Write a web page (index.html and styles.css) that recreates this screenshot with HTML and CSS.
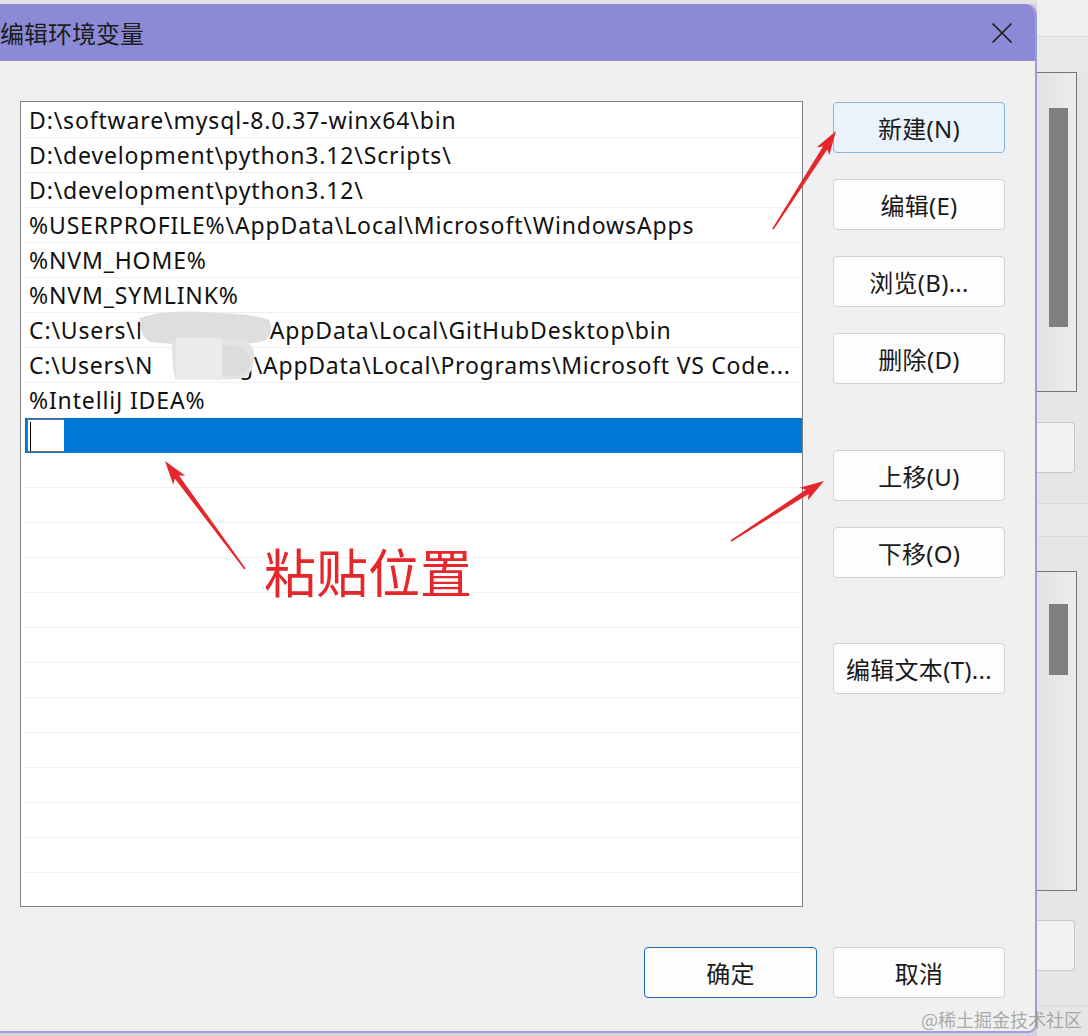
FILE: index.html
```html
<!DOCTYPE html>
<html lang="zh-CN">
<head>
<meta charset="utf-8">
<title>编辑环境变量</title>
<link rel="stylesheet" href="styles.css">
</head>
<body>
<div class="screen">
  <div class="dialog">
    <div class="titlebar">
      <span class="title">编辑环境变量</span>
      <svg class="close" width="22" height="22" viewBox="0 0 22 22"><path d="M1.5 1.5 L20.5 20.5 M20.5 1.5 L1.5 20.5"/></svg>
    </div>
    <div class="content">
      <div class="main">
        <div class="listbox">
          <div class="row">D:\software\mysql-8.0.37-winx64\bin</div>
          <div class="row">D:\development\python3.12\Scripts\</div>
          <div class="row">D:\development\python3.12\</div>
          <div class="row">%USERPROFILE%\AppData\Local\Microsoft\WindowsApps</div>
          <div class="row">%NVM_HOME%</div>
          <div class="row">%NVM_SYMLINK%</div>
          <div class="row">C:\Users\<span class="redact r1">N</span>AppData\Local\GitHubDesktop\bin</div>
          <div class="row tight">C:\Users\<span class="redact r2">N</span>g\AppData\Local\Programs\Microsoft VS Code...</div>
          <div class="row">%IntelliJ IDEA%</div>
          <div class="row selected"><span class="editbox"><span class="caret"></span></span></div>
          <div class="row"></div><div class="row"></div><div class="row"></div><div class="row"></div>
          <div class="row"></div><div class="row"></div><div class="row"></div><div class="row"></div>
          <div class="row"></div><div class="row"></div><div class="row"></div><div class="row"></div>
          <div class="row"></div>
          <svg class="smudge" width="152" height="76" viewBox="0 0 152 76">
            <path d="M2 8 C18 1 50 0 80 3 C100 4 120 5 131 10 C135 17 134 26 126 31 C110 35 90 33 70 34 C50 35 30 34 12 32 C4 28 1 16 2 8 Z" fill="#dedede"/>
            <path d="M34 30 L104 30 C114 32 117 40 116 52 C114 62 110 68 100 69 L38 70 C34 62 34 45 34 30 Z" fill="#e3e3e3"/>
            <rect x="38" y="28" width="46" height="42" fill="#ebebeb"/>
            <path d="M84 36 C96 34 110 38 113 50 C111 62 104 66 94 66 L84 66 Z" fill="#dcdcdc"/>
          </svg>
        </div>
        <div class="side">
          <button class="btn focus">新建(N)</button>
          <button class="btn">编辑(E)</button>
          <button class="btn">浏览(B)...</button>
          <button class="btn">删除(D)</button>
          <button class="btn sep1">上移(U)</button>
          <button class="btn">下移(O)</button>
          <button class="btn sep2">编辑文本(T)...</button>
        </div>
      </div>
      <div class="footer">
        <button class="btn ok">确定</button>
        <button class="btn">取消</button>
      </div>
    </div>
  </div>
  <div class="behind">
    <div class="b-top"></div>
    <div class="b-band"></div>
    <div class="b-scroll s1"><div class="b-thumb t1"></div></div>
    <div class="b-gap g1"></div>
    <div class="b-btn"></div>
    <div class="b-gap g2"></div>
    <div class="b-line"></div>
    <div class="b-gap g3"></div>
    <div class="b-scroll s2"><div class="b-thumb t2"></div></div>
    <div class="b-gap g4"></div>
    <div class="b-btn"></div>
    <div class="b-gap g5"></div>
  </div>
</div>

<svg class="annot" width="1088" height="1036" viewBox="0 0 1088 1036">
  <g fill="#e5262b">
    <polygon transform="translate(773 229) rotate(-57.26)" points="0,-0.8 96.5,-2.6 92.5,-7.5 116.5,0 92.5,7.5 96.5,2.6 0,0.8"/>
    <polygon transform="translate(245 569) rotate(-126.53)" points="0,-0.8 114.4,-2.6 110.4,-7.5 134.4,0 110.4,7.5 114.4,2.6 0,0.8"/>
    <polygon transform="translate(731 541) rotate(-32.83)" points="0,-0.8 90.7,-2.6 86.7,-7.5 110.7,0 86.7,7.5 90.7,2.6 0,0.8"/>
  </g>
</svg>
<div class="label">粘贴位置</div>
<div class="watermark">@稀土掘金技术社区</div>
</body>
</html>
```

FILE: styles.css
```css
* { box-sizing: border-box; }
html, body { margin: 0; padding: 0; }
body {
  width: 1088px;
  height: 1036px;
  overflow: hidden;
  position: relative;
  background: #d4d4da;
  font-family: "Noto Sans", "Noto Sans CJK SC", sans-serif;
  color: #1a1a1a;
}
.screen {
  display: flex;
  align-items: flex-start;
  height: 1036px;
  background: linear-gradient(#e3e3e3 0 4px, #d3d2dc 4px);
}
.dialog {
  flex: none;
  width: 1037px;
  margin-top: 4px;
  background: #f0f0f0;
  border-right: 2px solid #9f9cdc;
  border-bottom: 2px solid #9f9cdc;
  border-radius: 0 11px 9px 0;
  overflow: hidden;
}
.titlebar {
  height: 57px;
  background: #8c8ad7;
  display: flex;
  align-items: center;
  justify-content: space-between;
  padding-right: 22px;
}
.title {
  font-family: "Noto Sans CJK SC", sans-serif;
  font-size: 24px;
  color: #1c1c1c;
}
.close path { stroke: #1c1c1c; stroke-width: 1.7; fill: none; }
.content { padding: 40px 30px 33px 20px; }
.main { display: flex; gap: 30px; }
.listbox {
  position: relative;
  width: 783px;
  height: 806px;
  border: 1px solid #828282;
  background: #ffffff;
  padding: 1px 1px 0 3px;
  overflow: hidden;
  flex: none;
}
.row {
  height: 35px;
  line-height: 34px;
  border-bottom: 1px solid #efefef;
  padding-left: 5px;
  font-size: 23px;
  letter-spacing: 0.85px;
  white-space: nowrap;
  overflow: hidden;
  color: #111;
}
.row.tight { letter-spacing: 0.75px; }
.redact { display: inline-block; width: 134px; overflow: hidden; vertical-align: top; }
.redact.r2 { width: 104px; }
.row.selected {
  background: #0078d7;
  border-bottom-color: #0078d7;
  padding-left: 2px;
  padding-top: 1px;
  margin-left: 1px;
  margin-right: -1px;
}
.editbox {
  display: block;
  width: 37px;
  height: 33px;
  background: #fff;
  border: 1px solid #6e6e6e;
  border-right: none;
  padding: 2px 0 0 2px;
}
.caret { display: block; width: 1px; height: 29px; background: #000; }
.smudge { position: absolute; left: 117px; top: 208px; }
.side {
  display: flex;
  flex-direction: column;
  gap: 26px;
  padding-top: 1px;
  width: 172px;
  flex: none;
}
.btn {
  font-family: "Noto Sans", "Noto Sans CJK SC", sans-serif;
  font-size: 24px;
  letter-spacing: 0.3px;
  color: #1a1a1a;
  width: 172px;
  height: 51px;
  padding: 0;
  background: #fdfdfd;
  border: 1px solid #d0d0d0;
  border-radius: 4px;
  display: flex;
  align-items: center;
  justify-content: center;
}
.btn.focus { background: #eaf3fc; border-color: #86b3dc; }
.btn.sep1 { margin-top: 40px; }
.btn.sep2 { margin-top: 39px; }
.footer {
  display: flex;
  justify-content: flex-end;
  gap: 16px;
  margin-top: 40px;
}
.btn.ok { width: 173px; border-color: #1a6ab5; }

.behind {
  flex: none;
  width: 51px;
  height: 1036px;
  display: flex;
  flex-direction: column;
  background: #e6e6e6;
}
.b-top { height: 37px; background: #efefef; border-bottom: 1px solid #d8d8d8; flex: none; }
.b-band { height: 35px; flex: none; background: #e8e8e8; }
.b-scroll {
  flex: none;
  width: 40px;
  border: 1px solid #767676;
  border-left: none;
  background: linear-gradient(90deg, #e2e2e2, #ececec);
  padding-left: 12px;
}
.s1 { height: 320px; padding-top: 35px; }
.s2 { height: 320px; padding-top: 32px; }
.b-thumb { width: 19px; background: #808080; }
.t1 { height: 219px; }
.t2 { height: 71px; }
.b-gap { flex: none; }
.g1 { height: 30px; }
.g2 { height: 30px; }
.g3 { height: 35px; border-top: 1px solid #dadada; }
.g4 { height: 29px; }
.g5 { height: 35px; border-bottom: 1px solid #d8d8d8; }
.b-line { height: 33px; flex: none; border-top: 1px solid #d8d8d8; background: #e9e9e9; }
.b-btn {
  flex: none;
  width: 38px;
  height: 51px;
  background: #f2f2f2;
  border: 1px solid #c8c8c8;
  border-left: none;
  border-radius: 0 4px 4px 0;
}

.annot { position: absolute; left: 0; top: 0; pointer-events: none; }
.label {
  position: absolute;
  left: 264px;
  top: 541px;
  font-family: "Noto Sans CJK SC", sans-serif;
  font-size: 52px;
  line-height: 60px;
  color: #e5262b;
  white-space: nowrap;
}
.watermark {
  position: absolute;
  left: 921px;
  top: 1006px;
  font-family: "Noto Sans CJK SC", sans-serif;
  font-size: 18px;
  line-height: 26px;
  color: rgba(150, 150, 150, 0.8);
  white-space: nowrap;
}
```
